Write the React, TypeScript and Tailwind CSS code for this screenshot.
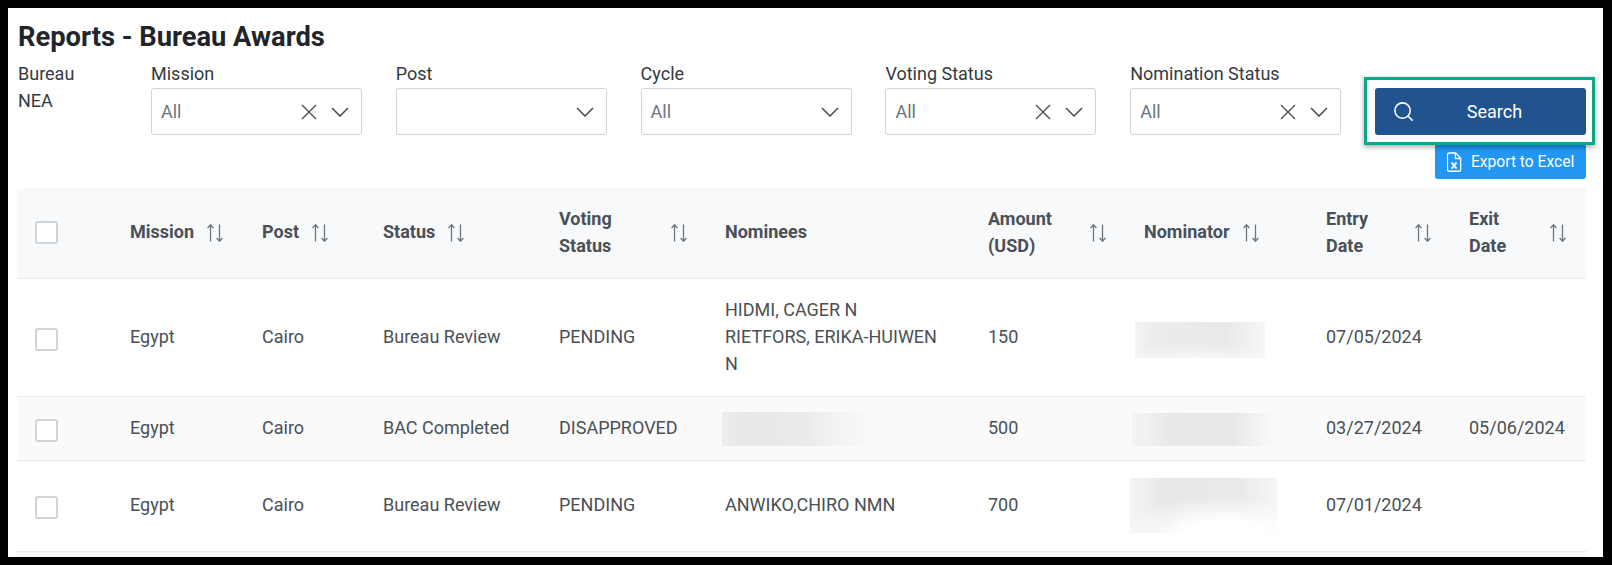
import React from 'react';
import { Search } from 'lucide-react';

const filters = [
  { label: 'Mission', value: 'All', clear: true },
  { label: 'Post', value: '', clear: false },
  { label: 'Cycle', value: 'All', clear: false },
  { label: 'Voting Status', value: 'All', clear: true },
  { label: 'Nomination Status', value: 'All', clear: true },
];

function SortIcon() {
  return (
    <svg width="20" height="20" viewBox="0 0 20 20" fill="none" stroke="#6c757d" strokeWidth="1.3" className="shrink-0">
      <path d="M5.5 18.5V1.8M2.6 5 5.5 1.800 8.400 5" />
      <path d="M14.5 1.5v16.700M11.600 15l2.900 3.200 2.900-3.200" />
    </svg>
  );
}

function ExcelIcon() {
  return (
    <svg width="15" height="20" viewBox="0 0 17 20" preserveAspectRatio="none" fill="none" stroke="white" strokeWidth="1.500" strokeLinejoin="round" className="shrink-0">
      <path d="M2.500 1h7.500l5.500 5.200v11a2 2 0 0 1-2 2h-11a2 2 0 0 1-2-2v-14.200a2 2 0 0 1 2-2z" />
      <path d="M9.500 1v5.500h6" />
      <path d="M5.200 10.500l5.600 6.200M10.800 10.500l-5.600 6.200" strokeWidth="2" />
    </svg>
  );
}

function ClearIcon() {
  return (
    <svg width="16" height="16" viewBox="0 0 16 16" fill="none" stroke="#495057" strokeWidth="1.400" className="shrink-0 mr-[14px]">
      <path d="M1 1l14 14M15 1L1 15" />
    </svg>
  );
}

function ChevronIcon() {
  return (
    <svg width="18" height="10" viewBox="0 0 18 10" fill="none" stroke="#495057" strokeWidth="1.600" className="shrink-0">
      <path d="M1 1l8 8 8-8" />
    </svg>
  );
}

function Checkbox({ body }: { body?: boolean }) {
  return <div className={`w-[23px] h-[23px] rounded-[3px] border-2 border-[#ced4da] bg-white ${body ? 'mt-[6px]' : ''}`} />;
}

function SelectBox({ value, clear }: { value: string; clear: boolean }) {
  return (
    <div className="h-[47px] border border-[#ced4da] rounded-[3px] bg-white flex items-center pl-[9px] pr-[12px]">
      <span className="flex-1 text-[#6c757d]">{value}</span>
      {clear && <ClearIcon />}
      <ChevronIcon />
    </div>
  );
}

function Header({ lines, wrap }: { lines: string[]; wrap?: boolean }) {
  return (
    <div className="flex items-center gap-[11px]">
      <span className={wrap ? 'flex-1 mb-[1px]' : 'mb-[3px]'}>
        {lines.map((l) => (
          <div key={l}>{l}</div>
        ))}
      </span>
      <SortIcon />
    </div>
  );
}

const th = 'px-[18px] text-left font-bold align-middle';
const td = 'pl-[18px] pr-[18px] pb-[2px] align-middle';

export default function App() {
  return (
    <div className="w-[1612px] h-[565px] bg-black pl-[8px] pt-[8px] overflow-hidden">
      <div
        className="w-[1595px] h-[549px] bg-white pl-[9px] pr-[17px] text-[18px] leading-[27px] text-[#495057] overflow-hidden"
        style={{ fontFamily: 'Roboto, sans-serif' }}
      >
        <h1 className="text-[27.3px] leading-[32px] font-bold text-[#212529] pt-[13px] pl-px">Reports - Bureau Awards</h1>

        <div className="flex mt-[7px]">
          <div className="w-[134px] shrink-0 pl-px text-[#343a40]">
            <div>Bureau</div>
            <div>NEA</div>
          </div>
          <div className="flex gap-[33.8px]">
            {filters.map((f) => (
              <div key={f.label} className="w-[211px]">
                <div className="text-[#343a40] h-[28px]">{f.label}</div>
                <SelectBox value={f.value} clear={f.clear} />
              </div>
            ))}
            <div className="w-[211px] relative pt-[28px]">
              <button className="w-full h-[47px] rounded-[3px] bg-[#215391] text-white flex items-center pl-[17px]">
                <Search size={23} strokeWidth={1.6} />
                <span className="flex-1 text-center pr-[12px]">Search</span>
              </button>
              <div className="absolute left-[-11px] right-[-9px] top-[17px] h-[68px] border-[3px] border-[#0aa888] shadow-[0_2px_5px_rgba(0,0,0,0.35)]" />
              <div className="flex justify-end mt-[9px]">
                <button className="h-[35px] w-[151px] rounded-[3px] bg-[#2196f3] text-white text-[15.600px] leading-[27px] flex items-center gap-[9px] pl-[12px]">
                  <ExcelIcon />
                  <span className="mt-[2px]">Export to Excel</span>
                </button>
              </div>
            </div>
          </div>
        </div>

        <table className="w-[1569px] table-fixed border-collapse mt-[9px]">
          <colgroup>
            <col className="w-[95px]" />
            <col className="w-[132px]" />
            <col className="w-[121px]" />
            <col className="w-[176px]" />
            <col className="w-[166px]" />
            <col className="w-[263px]" />
            <col className="w-[156px]" />
            <col className="w-[182px]" />
            <col className="w-[143px]" />
            <col className="w-[135px]" />
          </colgroup>
          <thead>
            <tr className="h-[90px] bg-[#f8f9fa] border-b border-[#e9ecef]">
              <th className={th}><Checkbox /></th>
              <th className={th}><Header lines={['Mission']} /></th>
              <th className={th}><Header lines={['Post']} /></th>
              <th className={th}><Header lines={['Status']} /></th>
              <th className={th}><Header lines={['Voting', 'Status']} wrap /></th>
              <th className={th}><div className="mb-[3px]">Nominees</div></th>
              <th className={th}><Header lines={['Amount', '(USD)']} wrap /></th>
              <th className={th}><Header lines={['Nominator']} /></th>
              <th className={th}><Header lines={['Entry', 'Date']} wrap /></th>
              <th className={th}><Header lines={['Exit', 'Date']} wrap /></th>
            </tr>
          </thead>
          <tbody>
            <tr className="h-[118px] border-b border-[#e9ecef]">
              <td className={td}><Checkbox body /></td>
              <td className={td}>Egypt</td>
              <td className={td}>Cairo</td>
              <td className={td}>Bureau Review</td>
              <td className={td}>PENDING</td>
              <td className={td}>HIDMI, CAGER N<br />RIETFORS, ERIKA-HUIWEN<br />N</td>
              <td className={td}>150</td>
              <td className={td}>
                <div className="w-[130px] h-[36px] ml-[-9px] mt-[8px] bg-[radial-gradient(ellipse_70%_50%_at_50%_110%,#f6f7f7_20%,transparent_100%),linear-gradient(90deg,#f3f4f4_0%,#ebeced_15%,#e8e9ea_70%,#f7f7f8_100%)]" />
              </td>
              <td className={td}>07/05/2024</td>
              <td className={td}></td>
            </tr>
            <tr className="h-[64px] bg-[#fafafa] border-b border-[#e9ecef]">
              <td className={td}><Checkbox body /></td>
              <td className={td}>Egypt</td>
              <td className={td}>Cairo</td>
              <td className={td}>BAC Completed</td>
              <td className={td}>DISAPPROVED</td>
              <td className={td}>
                <div className="w-[153px] h-[34px] ml-[-3px] mt-[4px] bg-[linear-gradient(90deg,#ecedee_0%,#e7e8e9_15%,#e9eaea_55%,#f2f3f3_75%,#fafafa_100%)]" />
              </td>
              <td className={td}>500</td>
              <td className={td}>
                <div className="w-[145px] h-[33px] ml-[-12px] mt-[4px] bg-[linear-gradient(90deg,#f3f3f4_0%,#f0f1f1_8%,#e8e9ea_25%,#e7e8e9_70%,#f5f5f5_90%,#fafafa_100%)]" />
              </td>
              <td className={td}>03/27/2024</td>
              <td className={td}>05/06/2024</td>
            </tr>
            <tr className="h-[91px] border-b border-[#e9ecef]">
              <td className={td}><Checkbox body /></td>
              <td className={td}>Egypt</td>
              <td className={td}>Cairo</td>
              <td className={td}>Bureau Review</td>
              <td className={td}>PENDING</td>
              <td className={td}>ANWIKO,CHIRO NMN</td>
              <td className={td}>700</td>
              <td className={td}>
                <div className="w-[147px] h-[55px] ml-[-14px] mt-[2px] bg-[radial-gradient(ellipse_75%_65%_at_65%_100%,#ffffff_35%,transparent_100%),linear-gradient(90deg,#f4f4f5_0%,#f0f1f1_8%,#e7e8e9_22%,#e9eaeb_75%,#f4f5f5_100%)]" />
              </td>
              <td className={td}>07/01/2024</td>
              <td className={td}></td>
            </tr>
          </tbody>
        </table>
        <div className="h-[6px] bg-[#fafafa]" />
      </div>
    </div>
  );
}
